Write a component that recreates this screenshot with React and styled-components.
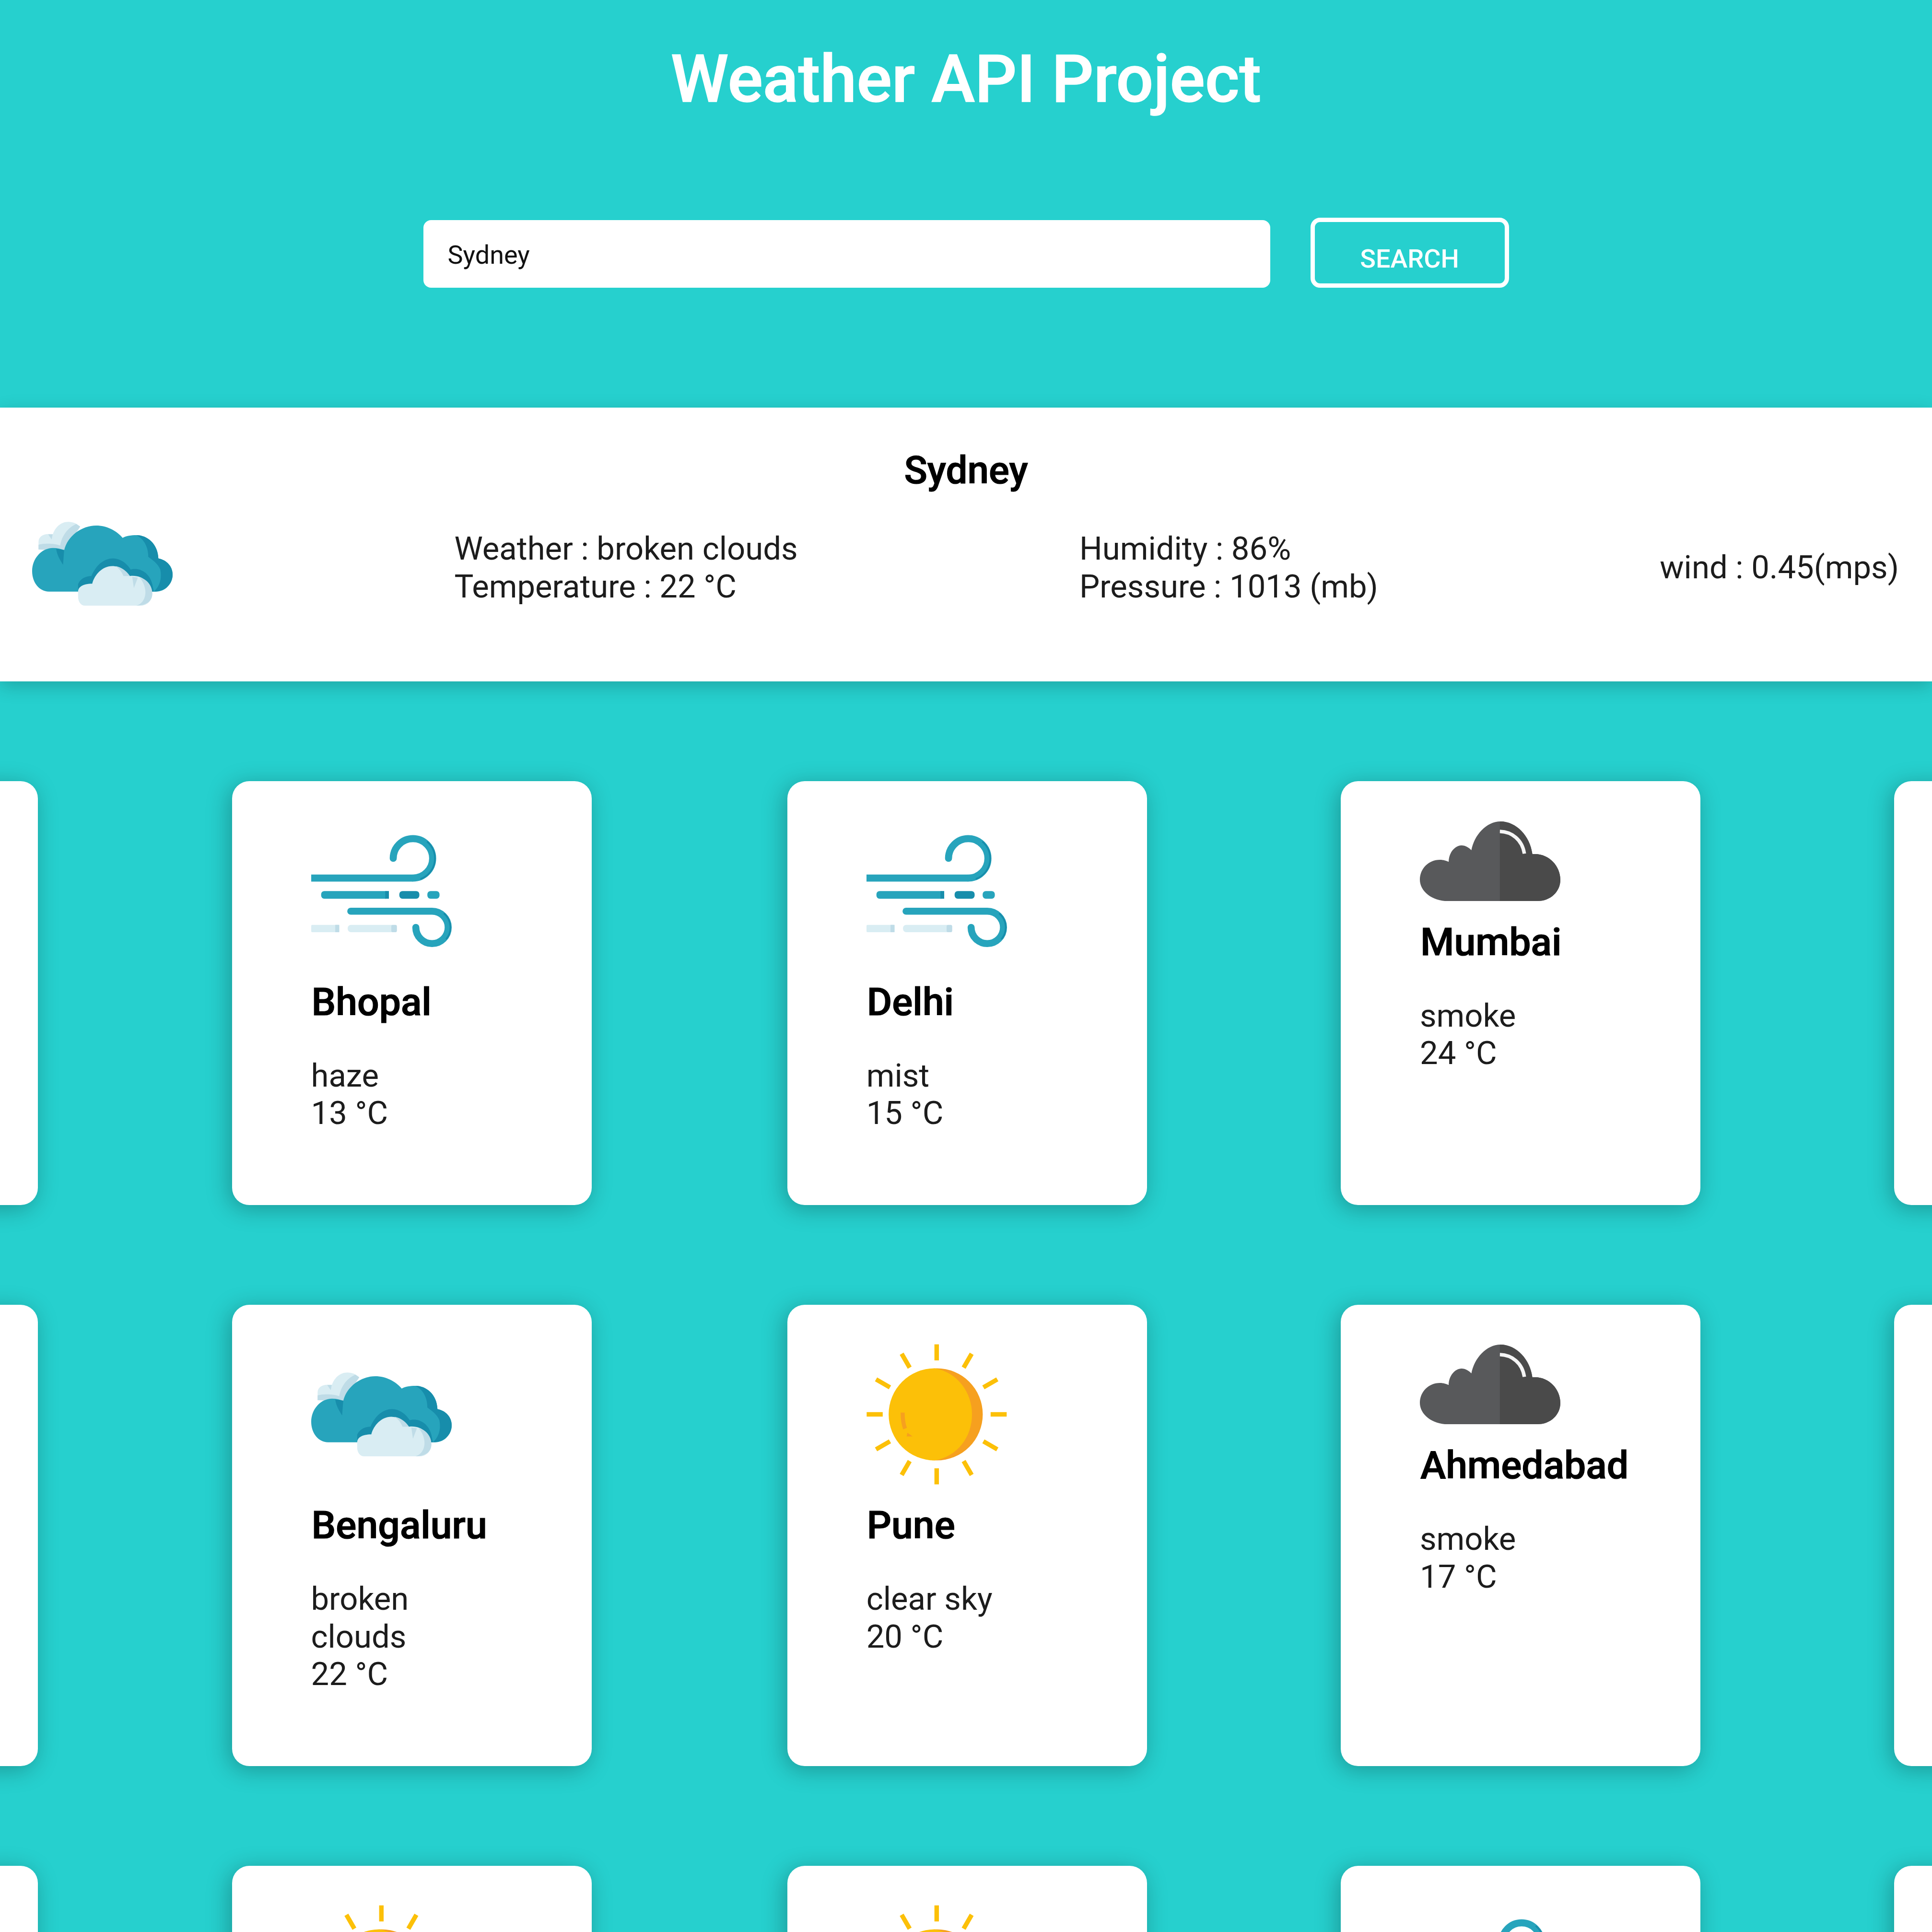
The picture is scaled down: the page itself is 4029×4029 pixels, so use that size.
import { Fragment } from "react";
import styled, { createGlobalStyle } from "styled-components";

const GlobalStyle = createGlobalStyle`
  html, body {
    margin: 0;
    padding: 0;
    background: #26d0ce;
    overflow: hidden;
  }
  body {
    font-family: Roboto, "Liberation Sans", sans-serif;
  }
`;

const Page = styled.div`
  width: 4029px;
  height: 4029px;
  overflow: hidden;
  background: #26d0ce;
`;

const Header = styled.header`
  height: 850px;
  box-sizing: border-box;
  padding-top: 90px;
`;

const Title = styled.h1`
  margin: 0 0 214px;
  text-align: center;
  color: #fff;
  font-size: 137px;
  line-height: 150px;
  font-weight: 500;
  -webkit-text-stroke: 1.5px #fff;
`;

const SearchForm = styled.form`
  display: flex;
  justify-content: center;
  align-items: flex-end;
  gap: 84px;
`;

const SearchInput = styled.input`
  width: 1766px;
  height: 141px;
  box-sizing: border-box;
  padding: 3px 48px 0 51px;
  border: none;
  border-radius: 16px;
  background: #fff;
  color: #111;
  font-family: Roboto, sans-serif;
  font-size: 54px;
`;

const SearchButton = styled.button`
  width: 414px;
  height: 146px;
  box-sizing: border-box;
  padding: 24px 0 0;
  border: 9px solid #fff;
  border-radius: 20px;
  background: transparent;
  color: #fff;
  font-family: Roboto, sans-serif;
  font-size: 54px;
  font-weight: 500;
`;

const Band = styled.section`
  height: 571px;
  box-sizing: border-box;
  padding-top: 84px;
  background: #fff;
  box-shadow: 0 10px 36px rgba(0, 0, 0, 0.2);
  color: #1c1c1c;
`;

const BandTitle = styled.h2`
  margin: 0 0 1px;
  text-align: center;
  color: #000;
  font-size: 80px;
  line-height: 94px;
  font-weight: 500;
  -webkit-text-stroke: 1.2px #000;
`;

const BandRow = styled.div`
  display: flex;
  justify-content: space-between;
  align-items: center;
  padding: 0 69px 0 67px;
  font-size: 67px;
  line-height: 78.5px;
`;

const Stat = styled.div`
  padding-top: 16px;
  white-space: nowrap;
`;

const CardGrid = styled.div`
  display: grid;
  grid-template-columns: 1154.5px 1158.2px 1154.3px 1154px 750px;
  row-gap: 208px;
  margin: 208px 0 0 -671px;
`;

const Card = styled.article`
  width: 750px;
  box-sizing: border-box;
  padding: 82.5px 170px 152px 165px;
  border-radius: 36px;
  background: #fff;
  box-shadow: -6px 8px 48px rgba(0, 0, 0, 0.27);
  color: #1c1c1c;
  font-size: 67px;
  line-height: 78.5px;
`;

const CardName = styled.h3`
  margin: 38px 0 67px 1px;
  color: #000;
  font-size: 80.5px;
  line-height: 94px;
  font-weight: 500;
  white-space: nowrap;
  -webkit-text-stroke: 1.2px #000;
`;

const Icon = styled.svg`
  display: block;
  width: 293px;
  height: ${(p) => p.$h || 293}px;
  flex: none;
`;

const BLUE = "#27a4bc";
const DARK = "#178dab";
const PALE = "#d9edf3";
const SHADE = "#bfdce7";
const YELLOW = "#fcc008";
const ORANGE = "#f6a01f";

function CloudsIcon() {
  return (
    <Icon viewBox="200 84.5 877 877">
      <path fill={PALE} d="M240 435V385C240 355 270 338 300 338H330C345 295 380 262 425 262C455 262 480 272 500 292L400 440Z" />
      <path fill={SHADE} d="M240 435V405C270 395 340 395 375 410C385 350 420 300 475 275L500 292L400 440Z" />
      <path fill={SHADE} d="M300 340H328L322 372Z" />
      <path fill={BLUE} d="M305 697C245 697 200 640 200 570C200 490 260 425 330 425C355 425 380 430 400 440C420 350 510 285 600 285C665 285 725 315 765 362C785 350 820 345 850 345C920 345 985 400 988 490C1040 500 1077 540 1077 590C1077 650 1030 697 975 697Z" />
      <path fill={DARK} d="M850 345C920 345 985 400 988 490C1040 500 1077 540 1077 590C1077 650 1030 697 960 697C1000 660 1010 610 1000 560C985 520 950 500 925 480C925 420 900 370 850 345Z" />
      <path fill={DARK} d="M350 430L400 437L393 530C375 500 355 470 350 430Z" />
      <path fill={DARK} d="M487 697V650C500 620 530 600 570 600C600 530 650 490 705 490C750 490 790 520 815 560C860 545 930 570 950 650L960 697Z" />
      <path fill={PALE} d="M487 697C487 670 515 648 575 648C590 590 640 538 700 538C745 538 785 565 810 600C880 590 950 640 950 710C950 755 915 785 880 785H530C505 785 487 760 487 730Z" />
      <path fill={SHADE} d="M720 538C760 545 790 570 810 600L770 600C760 575 745 555 720 538Z" />
      <path fill={SHADE} d="M870 610C920 620 950 665 950 710C950 755 915 785 850 785C890 775 915 730 905 680C900 650 885 625 870 610Z" />
      <path fill={SHADE} d="M825 605L860 610L835 675Z" />
    </Icon>
  );
}

function WindIcon() {
  return (
    <Icon viewBox="150 96.5 877 877">
      <g fill="none" strokeWidth="44" stroke={BLUE}>
        <path d="M150 453H785" />
        <path strokeLinecap="round" d="M785 453A123 123 0 1 0 662 330" />
        <path stroke={DARK} strokeWidth="10" d="M832 459A137 137 0 0 0 873 225" />
        <path strokeLinecap="round" d="M397 660H904A101 101 0 1 1 803 761" />
        <path stroke={DARK} strokeWidth="10" d="M978 673A115 115 0 0 1 992 835" />
      </g>
      <rect x="212" y="534" width="423" height="48" rx="20" fill={BLUE} />
      <rect x="612" y="534" width="23" height="48" fill={DARK} />
      <rect x="700" y="534" width="125" height="48" rx="20" fill={DARK} />
      <rect x="875" y="534" width="76" height="48" rx="20" fill={BLUE} />
      <rect x="150" y="745" width="175" height="46" rx="6" fill={PALE} />
      <rect x="300" y="745" width="25" height="46" fill={SHADE} />
      <rect x="378" y="745" width="300" height="46" rx="20" fill={PALE} />
      <rect x="650" y="745" width="35" height="46" rx="10" fill={SHADE} />
    </Icon>
  );
}

function SunIcon() {
  const rays = Array.from({ length: 12 }, (_, i) => i * 30);
  return (
    <Icon viewBox="85 70.5 875 875">
      {rays.map((deg) => (
        <rect key={deg} x="508" y="72" width="28" height="100" fill={YELLOW} transform={`rotate(${deg} 522 508)`} />
      ))}
      <circle cx="522" cy="508" r="287" fill={ORANGE} />
      <path fill={YELLOW} d="M510 221A287 287 0 0 0 510 795C650 770 742 650 742 508C742 370 650 245 510 221Z" />
      <path fill="none" stroke={ORANGE} strokeWidth="25" d="M310 497C310 540 315 570 325 597" />
      <path fill={ORANGE} d="M340 622L372 645L335 645Z" />
    </Icon>
  );
}

function SmokeIcon() {
  return (
    <Icon $h={168} viewBox="125 125 878 498">
      <path fill="#58595b" d="M300 623C200 623 125 560 125 490C125 420 180 365 250 365C275 365 290 372 305 378C305 320 345 275 385 275C410 275 430 288 447 305C465 210 540 125 630 125C730 125 815 220 828 330C925 320 1003 400 1003 490C1003 565 940 623 860 623Z" />
      <path fill="#4a4a4a" d="M625 125C730 125 815 220 828 330C925 320 1003 400 1003 490C1003 565 940 623 860 623H625Z" />
      <path fill="none" stroke="#f5f5f5" strokeWidth="22" d="M625 188C700 190 765 240 778 327" />
    </Icon>
  );
}

const rows = [
  [
    { name: "Bhopal", icon: WindIcon, lines: ["haze", "13 °C"] },
    { name: "Delhi", icon: WindIcon, lines: ["mist", "15 °C"] },
    { name: "Mumbai", icon: SmokeIcon, lines: ["smoke", "24 °C"] },
  ],
  [
    { name: "Bengaluru", icon: CloudsIcon, lines: ["broken clouds", "22 °C"] },
    { name: "Pune", icon: SunIcon, lines: ["clear sky", "20 °C"] },
    { name: "Ahmedabad", icon: SmokeIcon, lines: ["smoke", "17 °C"] },
  ],
  [{ icon: SunIcon }, { icon: SunIcon }, { icon: WindIcon }],
];

function CityCard({ city }) {
  const CityIcon = city.icon;
  return (
    <Card>
      <CityIcon />
      {city.name && <CardName>{city.name}</CardName>}
      {city.lines && city.lines.map((line) => <div key={line}>{line}</div>)}
    </Card>
  );
}

export default function App() {
  return (
    <Page>
      <GlobalStyle />
      <Header>
        <Title>Weather API Project</Title>
        <SearchForm onSubmit={(e) => e.preventDefault()}>
          <SearchInput type="text" defaultValue="Sydney" />
          <SearchButton type="submit">SEARCH</SearchButton>
        </SearchForm>
      </Header>

      <Band>
        <BandTitle>Sydney</BandTitle>
        <BandRow>
          <CloudsIcon />
          <Stat>
            <div>Weather : broken clouds</div>
            <div>Temperature : 22 °C</div>
          </Stat>
          <Stat>
            <div>Humidity : 86%</div>
            <div>Pressure : 1013 (mb)</div>
          </Stat>
          <Stat>wind : 0.45(mps)</Stat>
        </BandRow>
      </Band>

      <CardGrid>
        {rows.map((row, i) => (
          <Fragment key={i}>
            <Card />
            {row.map((city, j) => (
              <CityCard key={j} city={city} />
            ))}
            <Card />
          </Fragment>
        ))}
      </CardGrid>
    </Page>
  );
}
